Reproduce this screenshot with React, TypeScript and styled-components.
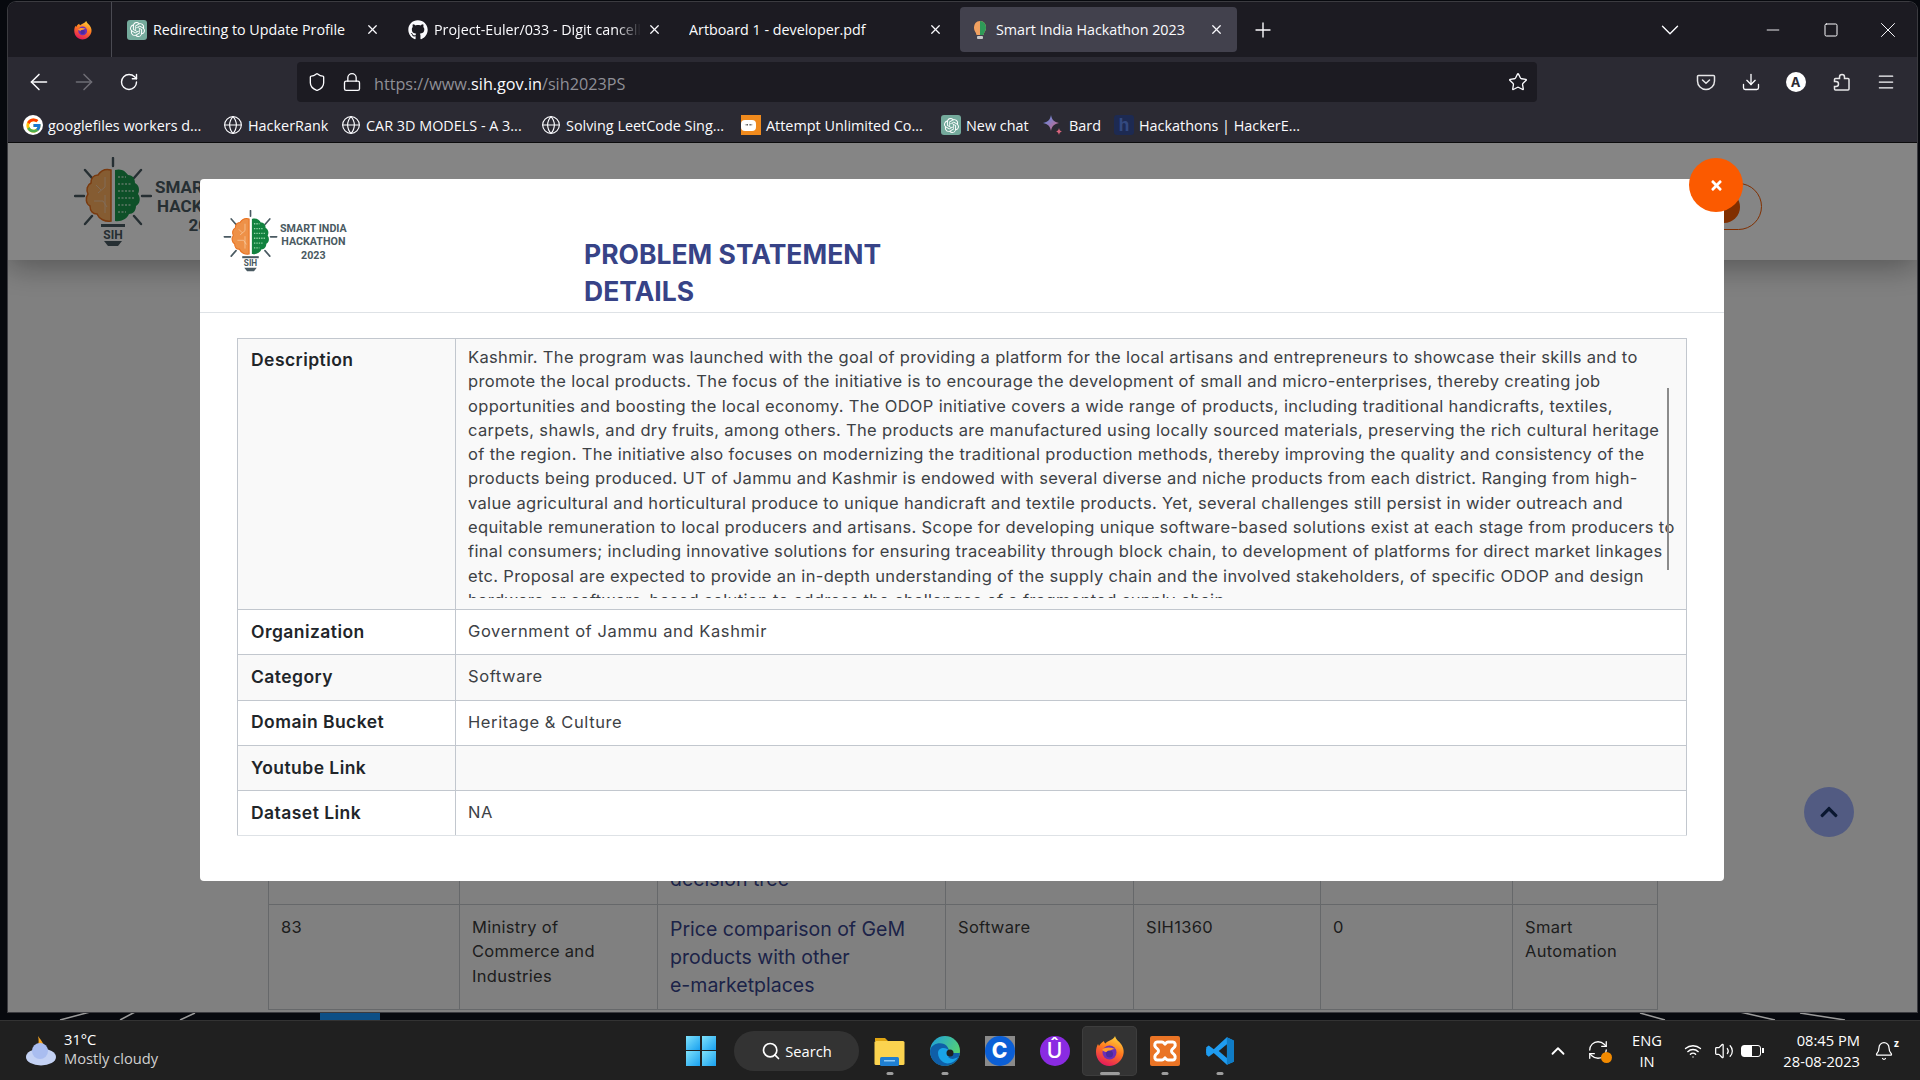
import styled, { createGlobalStyle } from "styled-components";
import {
  ArrowLeft,
  ArrowRight,
  Bell,
  ChevronDown,
  ChevronUp,
  Download,
  Globe,
  Lock,
  Menu,
  Minus,
  Plus,
  RefreshCw,
  RotateCw,
  Search,
  Shield,
  Square,
  Star,
  Volume2,
  Wifi,
  X,
} from "lucide-react";
import { FaGithub, FaChevronUp, FaTimes } from "react-icons/fa";
import { FcGoogle } from "react-icons/fc";
import { SiOpenai } from "react-icons/si";

const chromeFont = `"Open Sans", "Noto Sans", sans-serif`;
const pageFont = `Inter, "Noto Sans", sans-serif`;

const GlobalStyle = createGlobalStyle`
  html, body {
    margin: 0;
    padding: 0;
    width: 1920px;
    height: 1080px;
    overflow: hidden;
    background: #08090d;
  }
  * { box-sizing: border-box; }
`;

const Desktop = styled.div`
  position: relative;
  width: 1920px;
  height: 1080px;
  display: flex;
  flex-direction: column;
  overflow: hidden;
  background: #07090e;
`;
const Wallpaper = styled.svg`
  position: absolute;
  inset: 0;
`;
const BrowserSlot = styled.div`
  position: relative;
  height: 1020px;
  padding: 2px 3px 8px 8px;
`;
const Browser = styled.div`
  height: 100%;
  display: flex;
  flex-direction: column;
  border-radius: 8px 8px 0 0;
  overflow: hidden;
  box-shadow: 0 0 0 1px #3b3b40;
`;

const TabBar = styled.div`
  height: 55px;
  flex: none;
  display: flex;
  align-items: stretch;
  background: #1c1b22;
  color: #fbfbfe;
  font: 400 14.3px ${chromeFont};
`;
const FirefoxSlot = styled.div`
  width: 104px;
  flex: none;
  display: flex;
  align-items: center;
  justify-content: flex-end;
  padding-right: 18px;
  border-right: 1px solid #4a4a52;
`;
const Tab = styled.div<{ $width: number; $pad: number; $end: number; $active?: boolean }>`
  width: ${(p) => p.$width}px;
  flex: none;
  display: flex;
  align-items: center;
  gap: 6px;
  padding: 0 ${(p) => p.$end}px 0 ${(p) => p.$pad}px;
  ${(p) =>
    p.$active &&
    `
    margin: 5px 0 5px 10px;
    background: #42414d;
    border-radius: 4px;
  `}
`;
const TabTitle = styled.span<{ $fade?: boolean }>`
  flex: 1;
  overflow: hidden;
  white-space: nowrap;
  ${(p) =>
    p.$fade &&
    `
    mask-image: linear-gradient(to right, #000 88%, transparent);
  `}
`;
const NewTab = styled.div`
  margin-left: 14px;
  display: flex;
  align-items: center;
`;
const TabList = styled.div`
  margin-left: auto;
  margin-right: 60px;
  display: flex;
  align-items: center;
`;
const WinButton = styled.div`
  width: 57.5px;
  display: flex;
  align-items: center;
  justify-content: center;
`;

const NavRow = styled.div`
  height: 45px;
  flex: none;
  display: flex;
  align-items: flex-end;
  padding: 0 7px 0 8px;
  background: #2b2a33;
  color: #fbfbfe;
`;
const NavButton = styled.div<{ $dim?: boolean }>`
  width: 45px;
  height: 40px;
  flex: none;
  display: flex;
  align-items: center;
  justify-content: center;
  color: ${(p) => (p.$dim ? "#6e6d75" : "#fbfbfe")};
`;
const UrlBar = styled.div`
  width: 1240px;
  height: 40px;
  margin: 0 146px;
  flex: none;
  display: flex;
  align-items: center;
  padding: 0 9px 0 10px;
  background: #1c1b22;
  border-radius: 4px;
`;
const LockSlot = styled.span`
  margin-left: 15px;
  display: flex;
`;
const UrlText = styled.div`
  margin-left: 12px;
  padding-top: 3px;
  flex: 1;
  font: 400 16.2px ${chromeFont};
  color: #8f8f96;
  b {
    font-weight: 400;
    color: #fbfbfe;
  }
`;
const BookmarkRow = styled.div`
  height: 41px;
  flex: none;
  display: flex;
  align-items: center;
  gap: 10px;
  padding: 6px 0 0 15px;
  background: #2b2a33;
  border-bottom: 1px solid #0c0c0d;
  color: #fbfbfe;
  font: 400 14.4px ${chromeFont};
`;
const Bookmark = styled.div<{ $width: number }>`
  width: ${(p) => p.$width}px;
  flex: none;
  display: flex;
  align-items: center;
  gap: 5px;
  white-space: nowrap;
`;
const AppSquare = styled.span<{ $bg: string; $size?: number }>`
  width: ${(p) => p.$size ?? 20}px;
  height: ${(p) => p.$size ?? 20}px;
  flex: none;
  display: inline-flex;
  align-items: center;
  justify-content: center;
  border-radius: 3px;
  background: ${(p) => p.$bg};
  color: #fff;
`;
const GoogleBadge = styled.span`
  width: 20px;
  height: 20px;
  flex: none;
  display: inline-flex;
  align-items: center;
  justify-content: center;
  border-radius: 50%;
  background: #fff;
`;
const HackerH = styled.span`
  font: 700 17px ${pageFont};
  color: #33497f;
`;
const Avatar = styled.span`
  width: 20px;
  height: 20px;
  display: inline-flex;
  align-items: center;
  justify-content: center;
  border-radius: 50%;
  background: #fff;
  color: #2b2a33;
  font: 700 13px ${pageFont};
`;

/* page behind the dialog */
const Page = styled.div`
  position: relative;
  flex: 1;
  min-height: 0;
  display: flex;
  flex-direction: column;
  justify-content: space-between;
  background: #f6f6f6;
  overflow: hidden;
`;
const PageHeader = styled.div`
  height: 117px;
  flex: none;
  display: flex;
  align-items: center;
  justify-content: space-between;
  padding: 0 155px 0 66px;
  background: #fff;
  box-shadow: 0 6px 30px rgba(0, 0, 0, 0.35);
`;
const LogoWrap = styled.div<{ $gap: number }>`
  display: flex;
  align-items: center;
  gap: ${(p) => p.$gap}px;
`;
const LogoText = styled.div<{ $size: number; $line: number; $shift: number }>`
  padding-top: ${(p) => p.$shift}px;
  font: 700 ${(p) => p.$size}px/${(p) => p.$line}px "Roboto", sans-serif;
  color: #4a5a62;
  text-align: center;
  white-space: nowrap;
`;
const ProfilePill = styled.div`
  width: 100px;
  height: 47px;
  margin-top: 10px;
  display: flex;
  align-items: center;
  padding-left: 45px;
  border: 1px solid #f85b00;
  border-radius: 24px;
`;
const ProfileDot = styled.span`
  width: 32px;
  height: 32px;
  border-radius: 50%;
  background: #f85b00;
`;
const BackTable = styled.table`
  margin: 0 0 2px 260px;
  width: 1389px;
  flex: none;
  table-layout: fixed;
  border-collapse: collapse;
  font: 400 16.5px/24.4px ${pageFont};
  letter-spacing: 0.3px;
  color: #3a3a3a;
  td {
    height: 105px;
    border: 1px solid #c4c8cc;
    padding: 10px 12px 0;
    vertical-align: top;
  }
`;
const BackLink = styled.span`
  font-size: 19.5px;
  line-height: 28px;
  letter-spacing: 0;
  color: #37438a;
`;
const ClippedCell = styled.td`
  height: 40px !important;
  padding: 0 12px !important;
  border-top: 0 !important;
`;

/* dialog */
const Overlay = styled.div`
  position: absolute;
  inset: 0;
  padding: 36px 0 0 192px;
  background: rgba(0, 0, 0, 0.48);
`;
const Modal = styled.div`
  position: relative;
  width: 1524px;
  height: 702px;
  background: #fff;
  border-radius: 4px;
`;
const CloseButton = styled.div`
  position: absolute;
  top: -21px;
  right: -19px;
  width: 54px;
  height: 54px;
  display: flex;
  align-items: center;
  justify-content: center;
  border-radius: 50%;
  background: #fb5a00;
  color: #fff;
`;
const ModalHeader = styled.div`
  height: 134px;
  display: flex;
  align-items: flex-start;
  padding: 31px 0 0 23px;
  border-bottom: 1px solid #dee2e6;
`;
const ModalLogo = styled.div`
  width: 361px;
  flex: none;
`;
const Title = styled.h2`
  width: 340px;
  margin: 26px 0 0;
  font: 700 26.5px/37px ${pageFont};
  color: #374387;
`;
const Details = styled.table`
  width: 1450px;
  margin: 25px 0 0 37px;
  table-layout: fixed;
  border-collapse: collapse;
  font: 400 16.5px ${pageFont};
  letter-spacing: 0.6px;
  color: #3d4145;
  tr:nth-child(odd) {
    background: #f9f9f9;
  }
  tr:last-child th,
  tr:last-child td {
    border-bottom-color: #dee2e6;
  }
  th,
  td {
    height: 45.3px;
    padding: 0 12px 2px;
    text-align: left;
    border: 1px solid #c2c7ce;
  }
  th {
    width: 218px;
    padding: 0 13px 2px;
    font-size: 17.5px;
    font-weight: 600;
    letter-spacing: 0.45px;
    color: #212529;
  }
`;
const DescriptionHead = styled.th`
  vertical-align: top;
  padding-top: 10px !important;
`;
const DescriptionCell = styled.td`
  height: 271px !important;
  vertical-align: top;
  padding: 6px 0 0 12px !important;
`;
const DescriptionScroll = styled.div`
  position: relative;
  width: 1208px;
  height: 253px;
  overflow: hidden;
`;
const DescriptionLine = styled.div`
  height: 24.3px;
  line-height: 24.3px;
  white-space: nowrap;
  letter-spacing: 0.33px;
`;
const ScrollThumb = styled.div`
  position: absolute;
  top: 43px;
  right: 7px;
  width: 2px;
  height: 182px;
  background: #8b8b8b;
`;
const BackToTop = styled.div`
  position: absolute;
  right: 63px;
  bottom: 175px;
  width: 50px;
  height: 50px;
  display: flex;
  align-items: center;
  justify-content: center;
  border-radius: 50%;
  background: #525b82;
  color: #0a1730;
`;

/* windows taskbar */
const Taskbar = styled.div`
  position: relative;
  height: 60px;
  flex: none;
  display: flex;
  align-items: center;
  padding-left: 25px;
  background: #202020;
  border-top: 1px solid #333;
  color: #fff;
  font: 400 14.7px ${chromeFont};
`;
const Weather = styled.div`
  width: 661px;
  flex: none;
  display: flex;
  align-items: center;
  gap: 7px;
`;
const WeatherText = styled.div`
  line-height: 19px;
  padding-bottom: 3px;
  small {
    display: block;
    font-size: 14.7px;
    color: #d0d0d0;
  }
`;
const StartGrid = styled.div`
  width: 30px;
  height: 30px;
  flex: none;
  display: grid;
  grid-template-columns: 1fr 1fr;
  gap: 1.5px;
  span {
    background: linear-gradient(135deg, #7fe2fb, #18a0f0);
  }
`;
const SearchPill = styled.div`
  width: 125px;
  height: 40px;
  margin-left: 18px;
  flex: none;
  display: flex;
  align-items: center;
  justify-content: center;
  gap: 4px;
  border-radius: 20px;
  background: #333;
`;
const Dock = styled.div`
  display: flex;
  margin-left: 3px;
`;
const DockItem = styled.div<{ $active?: boolean; $dot?: boolean }>`
  position: relative;
  width: 55px;
  height: 50px;
  display: flex;
  align-items: center;
  justify-content: center;
  border-radius: 5px;
  ${(p) => p.$active && `background: #333; box-shadow: inset 0 0 0 1px #3d3d3d;`}
  ${(p) =>
    p.$dot &&
    `
    &::after {
      content: "";
      position: absolute;
      bottom: 1px;
      left: 50%;
      width: ${p.$active ? 20 : 7}px;
      height: 3px;
      transform: translateX(-50%);
      border-radius: 2px;
      background: #9d9d9d;
    }
  `}
`;
const GrayTile = styled.div`
  width: 30px;
  height: 30px;
  display: flex;
  align-items: center;
  justify-content: center;
  background: #8a8a8a;
`;
const RoundApp = styled.div<{ $bg: string; $weight: number }>`
  width: 30px;
  height: 30px;
  display: flex;
  align-items: center;
  justify-content: center;
  border-radius: 50%;
  background: ${(p) => p.$bg};
  color: #fff;
  font: ${(p) => p.$weight} 21px ${pageFont};
`;
const Tray = styled.div`
  margin-left: auto;
  display: flex;
  align-items: center;
  height: 100%;
`;
const SyncIcon = styled.div`
  position: relative;
  width: 24px;
  height: 24px;
  margin-left: 18px;
  span {
    position: absolute;
    right: -1px;
    bottom: 0;
    width: 11px;
    height: 11px;
    border-radius: 50%;
    background: #f28a00;
  }
`;
const Lang = styled.div`
  margin-left: 11px;
  width: 50px;
  text-align: center;
  line-height: 21px;
`;
const TrayIcons = styled.div`
  margin-left: 12px;
  display: flex;
  align-items: center;
  gap: 12px;
`;
const Battery = styled.div`
  position: relative;
  width: 20px;
  height: 12px;
  margin-left: -5px;
  border: 1.5px solid #fff;
  border-radius: 3px;
  span {
    display: block;
    width: 10px;
    height: 100%;
    background: #fff;
  }
  &::after {
    content: "";
    position: absolute;
    top: 2px;
    right: -4px;
    width: 2px;
    height: 5px;
    background: #fff;
  }
`;
const Clock = styled.div`
  margin-left: 9px;
  width: 90px;
  text-align: right;
  line-height: 21px;
`;
const BellSlot = styled.div`
  position: relative;
  width: 24px;
  margin: 0 22px 0 14px;
  display: flex;
  span {
    position: absolute;
    top: -5px;
    right: -1px;
    font-size: 10px;
    font-weight: 700;
  }
`;

function FirefoxIcon({ size }: { size: number }) {
  return (
    <svg width={size} height={size} viewBox="0 0 32 32">
      <defs>
        <linearGradient id="fxA" x1="0.7" y1="0" x2="0.3" y2="1">
          <stop offset="0" stopColor="#ffd23c" />
          <stop offset="0.45" stopColor="#ff7a1f" />
          <stop offset="1" stopColor="#e3155e" />
        </linearGradient>
      </defs>
      <path
        d="M21 1c1 4 4 5 6 8 3 4 3.500 9 1.500 13-2.500 5.500-7.500 9-13 9C8 31 2 25 2 17c0-3 .7-6 2-8l1 2c1-2 3-4 5-5 0 1 .5 2 1.500 2.500C14 5 20 5 21 1z"
        fill="url(#fxA)"
      />
      <circle cx="15.500" cy="17.500" r="7" fill="#6b2fb8" />
      <path d="M8 15c3-3 8-3 13-1-3 0-4 1-5 2-2 2-6 1-8-1z" fill="#ff9a2e" />
      <circle cx="15.500" cy="19" r="3.500" fill="#4c2a9e" />
    </svg>
  );
}

function SihBulb({ size }: { size: number }) {
  return (
    <svg width={size} height={size} viewBox="0 0 20 20">
      <path d="M10 1C6 1 4 4 4 8c0 3 2 4 2.500 7h7C14 12 16 11 16 8c0-4-2-7-6-7z" fill="#f0a060" />
      <path d="M10 1c4 0 6 3 6 7 0 3-2 4-2.500 7H10z" fill="#2e9a58" />
      <rect x="7" y="16" width="6" height="3" rx="1" fill="#c8c8c8" />
    </svg>
  );
}

function LogoMark({
  width,
  height,
  orange,
  green,
}: {
  width: number;
  height: number;
  orange: string;
  green: string;
}) {
  const lobe =
    "M37 13C30 11 26 15 24 18 19 18 17 22 17 26 13 28 12 33 14 37 11 41 12 47 16 49 16 54 19 57 23 57 25 62 31 65 37 64Z";
  return (
    <svg width={width} height={height} viewBox="0 0 78 90">
      <g stroke="#4a5a62" strokeWidth="2.400" strokeLinecap="round">
        <path d="M39 1V9M11 13L18 21M67 13L60 21M1 39H10M68 39H77M11 67L18 59M67 67L60 59" />
      </g>
      <path d={lobe} fill={orange} stroke="#e9701e" strokeWidth="1.500" />
      <path
        d="M31 20V30L24 36M31 38V56M22 28L27 33M20 44H29L33 50"
        stroke="#f9cfa6"
        strokeWidth="1"
        fill="none"
      />
      <path d={lobe} transform="matrix(-1 0 0 1 78 0)" fill={green} />
      <g stroke="#8fd2a5" strokeWidth="2" strokeDasharray="2 1.500">
        <path d="M44 20H52M44 27H58M44 34H61M44 41H61M44 48H58M44 55H52" />
      </g>
      <rect x="27" y="67" width="24" height="3" fill="#4a5a62" />
      <text
        x="39"
        y="82"
        textAnchor="middle"
        fontFamily="Roboto, sans-serif"
        fontWeight="700"
        fontSize="12"
        fill="#4a5a62"
      >
        SIH
      </text>
      <path d="M30 84H48L44 89H34Z" fill="#4a5a62" />
    </svg>
  );
}

function PocketIcon() {
  return (
    <svg width="20" height="20" viewBox="0 0 20 20" fill="none" stroke="#e6e6e8" strokeWidth="1.500">
      <path d="M2.500 3.500h15a1 1 0 0 1 1 1V9a8.500 8.500 0 0 1-17 0V4.500a1 1 0 0 1 1-1z" />
      <path d="M6.500 8L10 11.300 13.500 8" strokeLinecap="round" />
    </svg>
  );
}

function ExtensionIcon() {
  return (
    <svg width="20" height="20" viewBox="0 0 20 20" fill="none" stroke="#e6e6e8" strokeWidth="1.500">
      <path d="M11 2.500a2.500 2.500 0 0 1 2.500 2.500v1.500H17a1 1 0 0 1 1 1V17a1 1 0 0 1-1 1H4.500a1 1 0 0 1-1-1v-2.500H5a2.500 2.500 0 0 0 0-5H3.500V7.500a1 1 0 0 1 1-1H8.500V5A2.500 2.500 0 0 1 11 2.500z" />
    </svg>
  );
}

function AttemptIcon() {
  return (
    <svg width="20" height="20" viewBox="0 0 20 20">
      <rect width="20" height="20" fill="#f08a1d" />
      <rect x="0" y="5" width="15" height="11" rx="4" fill="#fff" />
      <path d="M3.500 10l3.500-1v1.500zM8.500 10.500V9l3.500 1z" fill="#444" />
    </svg>
  );
}

function WeatherIcon() {
  return (
    <svg width="32" height="30" viewBox="0 0 32 30">
      <path d="M13 0c2 3 6 7 6 12 0 2-1 3-2 4H4c3-1 6-2 8-5 2-3 2-7 1-11z" fill="#f6a623" />
      <ellipse cx="16" cy="21" rx="15" ry="8.500" fill="#c4d2f4" />
      <circle cx="15" cy="15" r="8" fill="#a9bdf0" />
    </svg>
  );
}

function FolderIcon() {
  return (
    <svg width="31" height="30" viewBox="0 0 31 30">
      <path d="M1 2h10l3 3h-13z" fill="#e0a512" />
      <rect x="0.500" y="5" width="30" height="24" rx="1.500" fill="#fbd34f" />
      <rect x="6" y="21" width="19" height="9" rx="1.500" fill="#1f7fd1" />
      <rect x="10" y="24" width="11" height="1.500" fill="#8cc8f5" />
    </svg>
  );
}

function EdgeIcon() {
  return (
    <svg width="32" height="32" viewBox="0 0 32 32">
      <defs>
        <linearGradient id="edgeA" x1="0" y1="0" x2="1" y2="0.6">
          <stop offset="0" stopColor="#1b9de2" />
          <stop offset="1" stopColor="#5ad66b" />
        </linearGradient>
      </defs>
      <circle cx="16" cy="16" r="15" fill="url(#edgeA)" />
      <path
        d="M1 16C2 9 10 7 15 9c4 2 6 6 4 9h12c-1 8-8 13-15 13C8 31 1 25 1 16z"
        fill="#0f5fa8"
      />
      <path d="M9 18c0-6 9-7 12-1 1 3-2 5-2 5 3 3 7 2 10 0-3 6-11 8-15 5-3-2-5-5-5-9z" fill="#19a3e8" />
      <circle cx="21" cy="18" r="3.500" fill="#202020" />
    </svg>
  );
}

function XamppIcon() {
  return (
    <svg width="30" height="30" viewBox="0 0 30 30">
      <rect width="30" height="30" rx="2" fill="#ea7425" />
      <path
        d="M7 6h5c1.500 0 2 1 3 2 1-1 1.500-2 3-2h5c2 0 3 3 1.500 5-1 1.500-3 2-3 4s2 2.500 3 4c1.500 2 .5 5-1.500 5h-5c-1.500 0-2-1-3-2-1 1-1.500 2-3 2H7c-2 0-3-3-1.500-5 1-1.500 3-2 3-4s-2-2.500-3-4C4 9 5 6 7 6z"
        fill="none"
        stroke="#fff"
        strokeWidth="3"
      />
    </svg>
  );
}

function VsCodeIcon() {
  return (
    <svg width="30" height="30" viewBox="0 0 24 24">
      <path d="M17.500 1L23 3.500v17L17.500 23 7 13.500l-4 3-2-1.500v-6l2-1.500 4 3z" fill="#1f9cf0" />
      <path d="M17.500 1L23 3.500v17L17.500 23V16.500l-5-4.500 5-4.500z" fill="#0f7cc6" />
      <path d="M17.500 6.500V17.500L11 12z" fill="#202020" />
      <path d="M3 8.500L7 11.500 3.500 15 1 13.500v-3z" fill="#1f9cf0" />
    </svg>
  );
}

function BardIcon() {
  return (
    <svg width="22" height="22" viewBox="0 0 22 22">
      <defs>
        <linearGradient id="bardA" x1="0" y1="0" x2="1" y2="1">
          <stop offset="0" stopColor="#4f8ef0" />
          <stop offset="1" stopColor="#d9657d" />
        </linearGradient>
      </defs>
      <path d="M9 1c1 5 3 7 8 8-5 1-7 3-8 8-1-5-3-7-8-8 5-1 7-3 8-8z" fill="url(#bardA)" />
      <path d="M17 14c.4 2 1 3 3 3.500-2 .5-2.600 1.500-3 3.500-.4-2-1-3-3-3.500 2-.5 2.600-1.500 3-3.500z" fill="#d9657d" />
    </svg>
  );
}

const descriptionLines = [
  "Kashmir. The program was launched with the goal of providing a platform for the local artisans and entrepreneurs to showcase their skills and to",
  "promote the local products. The focus of the initiative is to encourage the development of small and micro-enterprises, thereby creating job",
  "opportunities and boosting the local economy. The ODOP initiative covers a wide range of products, including traditional handicrafts, textiles,",
  "carpets, shawls, and dry fruits, among others. The products are manufactured using locally sourced materials, preserving the rich cultural heritage",
  "of the region. The initiative also focuses on modernizing the traditional production methods, thereby improving the quality and consistency of the",
  "products being produced. UT of Jammu and Kashmir is endowed with several diverse and niche products from each district. Ranging from high-",
  "value agricultural and horticultural produce to unique handicraft and textile products. Yet, several challenges still persist in wider outreach and",
  "equitable remuneration to local producers and artisans. Scope for developing unique software-based solutions exist at each stage from producers to",
  "final consumers; including innovative solutions for ensuring traceability through block chain, to development of platforms for direct market linkages",
  "etc. Proposal are expected to provide an in-depth understanding of the supply chain and the involved stakeholders, of specific ODOP and design",
  "hardware or software-based solution to address the challenges of a fragmented supply chain.",
];

const detailRows = [
  { label: "Organization", value: "Government of Jammu and Kashmir" },
  { label: "Category", value: "Software" },
  { label: "Domain Bucket", value: "Heritage & Culture" },
  { label: "Youtube Link", value: "" },
  { label: "Dataset Link", value: "NA" },
];

const bookmarks = [
  { icon: <GoogleBadge><FcGoogle size={17} /></GoogleBadge>, text: "googlefiles workers d...", width: 190 },
  { icon: <Globe size={20} strokeWidth={1.4} />, text: "HackerRank", width: 108 },
  { icon: <Globe size={20} strokeWidth={1.4} />, text: "CAR 3D MODELS - A 3...", width: 190 },
  { icon: <Globe size={20} strokeWidth={1.4} />, text: "Solving LeetCode Sing...", width: 190 },
  { icon: <AttemptIcon />, text: "Attempt Unlimited Co...", width: 190 },
  { icon: <AppSquare $bg="#74aa9c"><SiOpenai size={15} /></AppSquare>, text: "New chat", width: 91 },
  { icon: <BardIcon />, text: "Bard", width: 62 },
  { icon: <AppSquare $bg="#1d2a52"><HackerH>h</HackerH></AppSquare>, text: "Hackathons | HackerE...", width: 180 },
];

export default function App() {
  return (
    <>
      <GlobalStyle />
      <Desktop>
        <Wallpaper width="1920" height="1080" viewBox="0 0 1920 1080">
          <path d="M320 1012h60v8h-60z" fill="#0d4f86" />
          <path
            d="M60 1020L90 1012M120 1020L135 1012M180 1020L195 1013M1640 1013L1665 1020M1740 1012L1775 1020M1800 1013L1845 1020"
            stroke="#9a9a9a"
            strokeWidth="1.500"
          />
        </Wallpaper>
        <BrowserSlot>
          <Browser>
            <TabBar>
              <FirefoxSlot>
                <FirefoxIcon size={20} />
              </FirefoxSlot>
              <Tab $width={282} $pad={15} $end={14}>
                <AppSquare $bg="#74aa9c"><SiOpenai size={15} /></AppSquare>
                <TabTitle>Redirecting to Update Profile</TabTitle>
                <X size={15} />
              </Tab>
              <Tab $width={281} $pad={14} $end={13}>
                <FaGithub size={20} />
                <TabTitle $fade>Project-Euler/033 - Digit cancelling fractions</TabTitle>
                <X size={15} />
              </Tab>
              <Tab $width={275} $pad={14} $end={7}>
                <TabTitle>Artboard 1 - developer.pdf</TabTitle>
                <X size={15} />
              </Tab>
              <Tab $width={277} $pad={10} $end={13} $active>
                <SihBulb size={20} />
                <TabTitle>Smart India Hackathon 2023</TabTitle>
                <X size={15} />
              </Tab>
              <NewTab>
                <Plus size={24} strokeWidth={1.4} />
              </NewTab>
              <TabList>
                <ChevronDown size={30} strokeWidth={1.1} />
              </TabList>
              <WinButton><Minus size={20} strokeWidth={1.1} /></WinButton>
              <WinButton><Square size={16} strokeWidth={1.5} /></WinButton>
              <WinButton><X size={26} strokeWidth={0.9} /></WinButton>
            </TabBar>
            <NavRow>
              <NavButton><ArrowLeft size={26} strokeWidth={1.4} /></NavButton>
              <NavButton $dim><ArrowRight size={26} strokeWidth={1.4} /></NavButton>
              <NavButton><RotateCw size={20} strokeWidth={1.7} /></NavButton>
              <UrlBar>
                <Shield size={20} strokeWidth={1.6} />
                <LockSlot><Lock size={20} strokeWidth={1.6} /></LockSlot>
                <UrlText>https://www.<b>sih.gov.in</b>/sih2023PS</UrlText>
                <Star size={20} strokeWidth={1.6} />
              </UrlBar>
              <NavButton><PocketIcon /></NavButton>
              <NavButton><Download size={20} strokeWidth={1.6} /></NavButton>
              <NavButton><Avatar>A</Avatar></NavButton>
              <NavButton><ExtensionIcon /></NavButton>
              <NavButton><Menu size={20} strokeWidth={1.5} /></NavButton>
            </NavRow>
            <BookmarkRow>
              {bookmarks.map((b) => (
                <Bookmark key={b.text} $width={b.width}>
                  {b.icon}
                  <span>{b.text}</span>
                </Bookmark>
              ))}
            </BookmarkRow>
            <Page>
              <PageHeader>
                <LogoWrap $gap={3}>
                  <LogoMark width={78} height={90} orange="#ffb060" green="#1c9a4e" />
                  <LogoText $size={17} $line={19} $shift={9}>
                    SMART INDIA
                    <br />
                    HACKATHON
                    <br />
                    2023
                  </LogoText>
                </LogoWrap>
                <ProfilePill>
                  <ProfileDot />
                </ProfilePill>
              </PageHeader>
              <BackTable>
                <colgroup>
                  <col style={{ width: 191 }} />
                  <col style={{ width: 198 }} />
                  <col style={{ width: 288 }} />
                  <col style={{ width: 188 }} />
                  <col style={{ width: 187 }} />
                  <col style={{ width: 192 }} />
                  <col style={{ width: 145 }} />
                </colgroup>
                <tbody>
                  <tr>
                    <ClippedCell />
                    <ClippedCell />
                    <ClippedCell>
                      <BackLink>decision tree</BackLink>
                    </ClippedCell>
                    <ClippedCell />
                    <ClippedCell />
                    <ClippedCell />
                    <ClippedCell />
                  </tr>
                  <tr>
                    <td>83</td>
                    <td>
                      Ministry of
                      <br />
                      Commerce and
                      <br />
                      Industries
                    </td>
                    <td>
                      <BackLink>
                        Price comparison of GeM
                        <br />
                        products with other
                        <br />
                        e-marketplaces
                      </BackLink>
                    </td>
                    <td>Software</td>
                    <td>SIH1360</td>
                    <td>0</td>
                    <td>Smart Automation</td>
                  </tr>
                </tbody>
              </BackTable>
              <Overlay>
                <Modal>
                  <CloseButton>
                    <FaTimes size={15} />
                  </CloseButton>
                  <ModalHeader>
                    <ModalLogo>
                      <LogoWrap $gap={2}>
                        <LogoMark width={55} height={62} orange="#ee9148" green="#11823f" />
                        <LogoText $size={10.7} $line={13.5} $shift={2}>
                          SMART INDIA
                          <br />
                          HACKATHON
                          <br />
                          2023
                        </LogoText>
                      </LogoWrap>
                    </ModalLogo>
                    <Title>PROBLEM STATEMENT DETAILS</Title>
                  </ModalHeader>
                  <Details>
                    <tbody>
                      <tr>
                        <DescriptionHead>Description</DescriptionHead>
                        <DescriptionCell>
                          <DescriptionScroll>
                            {descriptionLines.map((line) => (
                              <DescriptionLine key={line}>{line}</DescriptionLine>
                            ))}
                            <ScrollThumb />
                          </DescriptionScroll>
                        </DescriptionCell>
                      </tr>
                      {detailRows.map((row) => (
                        <tr key={row.label}>
                          <th>{row.label}</th>
                          <td>{row.value}</td>
                        </tr>
                      ))}
                    </tbody>
                  </Details>
                </Modal>
                <BackToTop>
                  <FaChevronUp size={20} />
                </BackToTop>
              </Overlay>
            </Page>
          </Browser>
        </BrowserSlot>
        <Taskbar>
          <Weather>
            <WeatherIcon />
            <WeatherText>
              31°C
              <small>Mostly cloudy</small>
            </WeatherText>
          </Weather>
          <StartGrid>
            <span />
            <span />
            <span />
            <span />
          </StartGrid>
          <SearchPill>
            <Search size={20} strokeWidth={2} />
            Search
          </SearchPill>
          <Dock>
            <DockItem $dot><FolderIcon /></DockItem>
            <DockItem $dot><EdgeIcon /></DockItem>
            <DockItem><GrayTile><RoundApp $bg="#0b5fd6" $weight={800}>C</RoundApp></GrayTile></DockItem>
            <DockItem><RoundApp $bg="#8a2be2" $weight={500}>Û</RoundApp></DockItem>
            <DockItem $active $dot><FirefoxIcon size={32} /></DockItem>
            <DockItem $dot><XamppIcon /></DockItem>
            <DockItem $dot><VsCodeIcon /></DockItem>
          </Dock>
          <Tray>
            <ChevronUp size={22} strokeWidth={2} />
            <SyncIcon>
              <RefreshCw size={22} strokeWidth={1.4} />
              <span />
            </SyncIcon>
            <Lang>
              ENG
              <br />
              IN
            </Lang>
            <TrayIcons>
              <Wifi size={18} strokeWidth={1.8} />
              <Volume2 size={20} strokeWidth={1.5} />
              <Battery><span /></Battery>
            </TrayIcons>
            <Clock>
              08:45 PM
              <br />
              28-08-2023
            </Clock>
            <BellSlot>
              <Bell size={20} strokeWidth={1.5} />
              <span>z</span>
            </BellSlot>
          </Tray>
        </Taskbar>
      </Desktop>
    </>
  );
}
